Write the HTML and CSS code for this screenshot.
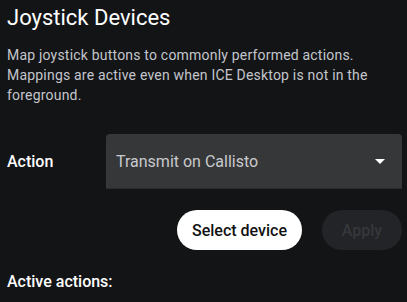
FILE: index.html
```html
<!DOCTYPE html>
<html>
<head>
<meta charset="utf-8">
<link rel="stylesheet" href="styles.css">
</head>
<body>
<div class="page">
  <h1 class="title">Joystick Devices</h1>
  <p class="desc">Map joystick buttons to commonly performed actions. Mappings are active even when ICE Desktop is not in the foreground.</p>
  <div class="action-row">
    <div class="label">Action</div>
    <div class="select">
      <span class="select-text">Transmit on Callisto</span>
      <svg class="caret" width="10" height="5" viewBox="0 0 10 5"><path d="M0 0H10L5 5Z" fill="#ffffff"/></svg>
    </div>
  </div>
  <div class="buttons">
    <button class="btn btn-primary">Select device</button>
    <button class="btn btn-disabled">Apply</button>
  </div>
  <div class="label active">Active actions:</div>
</div>
</body>
</html>
```

FILE: styles.css
```css
html, body {
  margin: 0;
  padding: 0;
  background: #131416;
  height: 100%;
}
body {
  font-family: Roboto, "Liberation Sans", sans-serif;
  color: #ffffff;
}
.page {
  padding: 0 5px 0 7px;
}
.title {
  margin: 4px 0 0 0;
  font-size: 22px;
  line-height: 28px;
  font-weight: 400;
  color: #ffffff;
}
.desc {
  margin: 13px 0 0 0;
  font-size: 14px;
  line-height: 20px;
  letter-spacing: 0.2px;
  color: #c3c6cc;
}
.action-row {
  margin-top: 29px;
  display: grid;
  grid-template-columns: 99px 1fr;
  align-items: center;
}
.label {
  font-size: 16px;
  line-height: 20px;
  font-weight: 500;
  color: #ffffff;
}
.select {
  height: 54px;
  background: #363739;
  border-radius: 4px 4px 0 0;
  border-bottom: 1px solid #2a2b2d;
  display: flex;
  align-items: center;
  justify-content: space-between;
  padding: 0 17px 0 10px;
}
.select-text {
  font-size: 16px;
  color: #c9cacd;
}
.caret {
  display: block;
}
.buttons {
  margin-top: 21px;
  display: flex;
  justify-content: flex-end;
  gap: 20px;
}
.btn {
  height: 40px;
  border: none;
  border-radius: 20px;
  font-family: Roboto, "Liberation Sans", sans-serif;
  font-size: 16px;
  font-weight: 500;
  padding: 0;
}
.btn-primary {
  width: 125px;
  background: #ffffff;
  color: #111111;
}
.btn-disabled {
  width: 80px;
  background: #232427;
  color: #36373a;
}
.active {
  margin-top: 22px;
}
```
